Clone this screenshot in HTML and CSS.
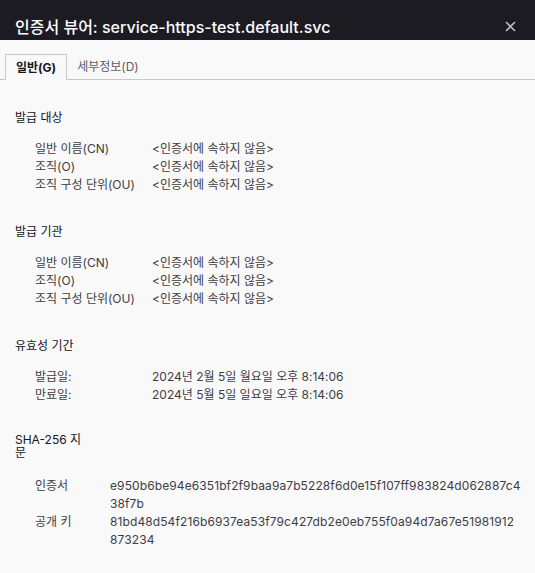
FILE: index.html
```html
<!DOCTYPE html>
<html lang="ko">
<head>
    <meta charset="UTF-8">
    <meta name="viewport" content="width=device-width, initial-scale=1.0">
    <title>인증서 뷰어</title>
    <link rel="stylesheet" href="styles.css">
</head>
<body>
    <div class="titlebar">
        <h1>인증서 뷰어: service-https-test.default.svc</h1>
        <svg class="close" width="11" height="11" viewBox="0 0 11 11">
            <path d="M1 1 L10 10 M10 1 L1 10" stroke="#b8b8bd" stroke-width="1.6" fill="none"/>
        </svg>
    </div>
    <div class="tabs">
        <div class="tab active">일반(G)</div>
        <div class="tab">세부정보(D)</div>
    </div>
    <div class="content">
        <div class="section">
            <div class="heading">발급 대상</div>
            <div class="rows">
                <div class="label">일반 이름(CN)</div><div class="value">&lt;인증서에 속하지 않음&gt;</div>
                <div class="label">조직(O)</div><div class="value">&lt;인증서에 속하지 않음&gt;</div>
                <div class="label">조직 구성 단위(OU)</div><div class="value">&lt;인증서에 속하지 않음&gt;</div>
            </div>
        </div>
        <div class="section">
            <div class="heading">발급 기관</div>
            <div class="rows">
                <div class="label">일반 이름(CN)</div><div class="value">&lt;인증서에 속하지 않음&gt;</div>
                <div class="label">조직(O)</div><div class="value">&lt;인증서에 속하지 않음&gt;</div>
                <div class="label">조직 구성 단위(OU)</div><div class="value">&lt;인증서에 속하지 않음&gt;</div>
            </div>
        </div>
        <div class="section">
            <div class="heading">유효성 기간</div>
            <div class="rows">
                <div class="label">발급일:</div><div class="value">2024년 2월 5일 월요일 오후 8:14:06</div>
                <div class="label">만료일:</div><div class="value">2024년 5월 5일 일요일 오후 8:14:06</div>
            </div>
        </div>
        <div class="section fingerprint">
            <div class="heading">SHA-256 지문</div>
            <div class="rows">
                <div class="label">인증서</div><div class="value hash">e950b6be94e6351bf2f9baa9a7b5228f6d0e15f107ff983824d062887c438f7b</div>
                <div class="label">공개 키</div><div class="value hash">81bd48d54f216b6937ea53f79c427db2e0eb755f0a94d7a67e51981912873234</div>
            </div>
        </div>
    </div>
</body>
</html>
```
FILE: styles.css
```css
body {
    margin: 0;
    background-color: #f9f9fa;
    font-family: Inter, "Noto Sans CJK KR", sans-serif;
    font-size: 12px;
    color: #15141a;
}
.titlebar {
    height: 40px;
    background-color: #1c1b22;
    display: flex;
    align-items: flex-end;
    justify-content: space-between;
    padding: 0 19px 0 15px;
}
.titlebar h1 {
    margin: 0 0 1px;
    font-size: 16px;
    font-weight: 500;
    color: #fbfbfe;
    line-height: 24px;
}
.close {
    margin-bottom: 8px;
}
.tabs {
    display: flex;
    margin-top: 14px;
    padding-left: 5px;
    border-bottom: 1px solid #c8c8cc;
    height: 25px;
}
.tab {
    padding: 0 10px;
    line-height: 25px;
    color: #5b5b66;
}
.tab.active {
    font-weight: 700;
    color: #15141a;
    border: 1px solid #c8c8cc;
    border-bottom: 1px solid #f9f9fa;
    background-color: #f9f9fa;
    margin-bottom: -1px;
}
.content {
    padding: 29px 14px 20px 15px;
}
.section {
    margin-bottom: 29px;
}
.heading {
    line-height: 18px;
    margin-bottom: 13px;
}
.rows {
    display: grid;
    grid-template-columns: 117px 1fr;
    padding-left: 20px;
    line-height: 18px;
    color: #3d3d44;
}
.fingerprint .heading {
    width: 72px;
    line-height: 13px;
    margin-bottom: 18px;
}
.fingerprint .rows {
    grid-template-columns: 75px 1fr;
}
.hash {
    word-break: break-all;
    letter-spacing: 0.1px;
}
```
